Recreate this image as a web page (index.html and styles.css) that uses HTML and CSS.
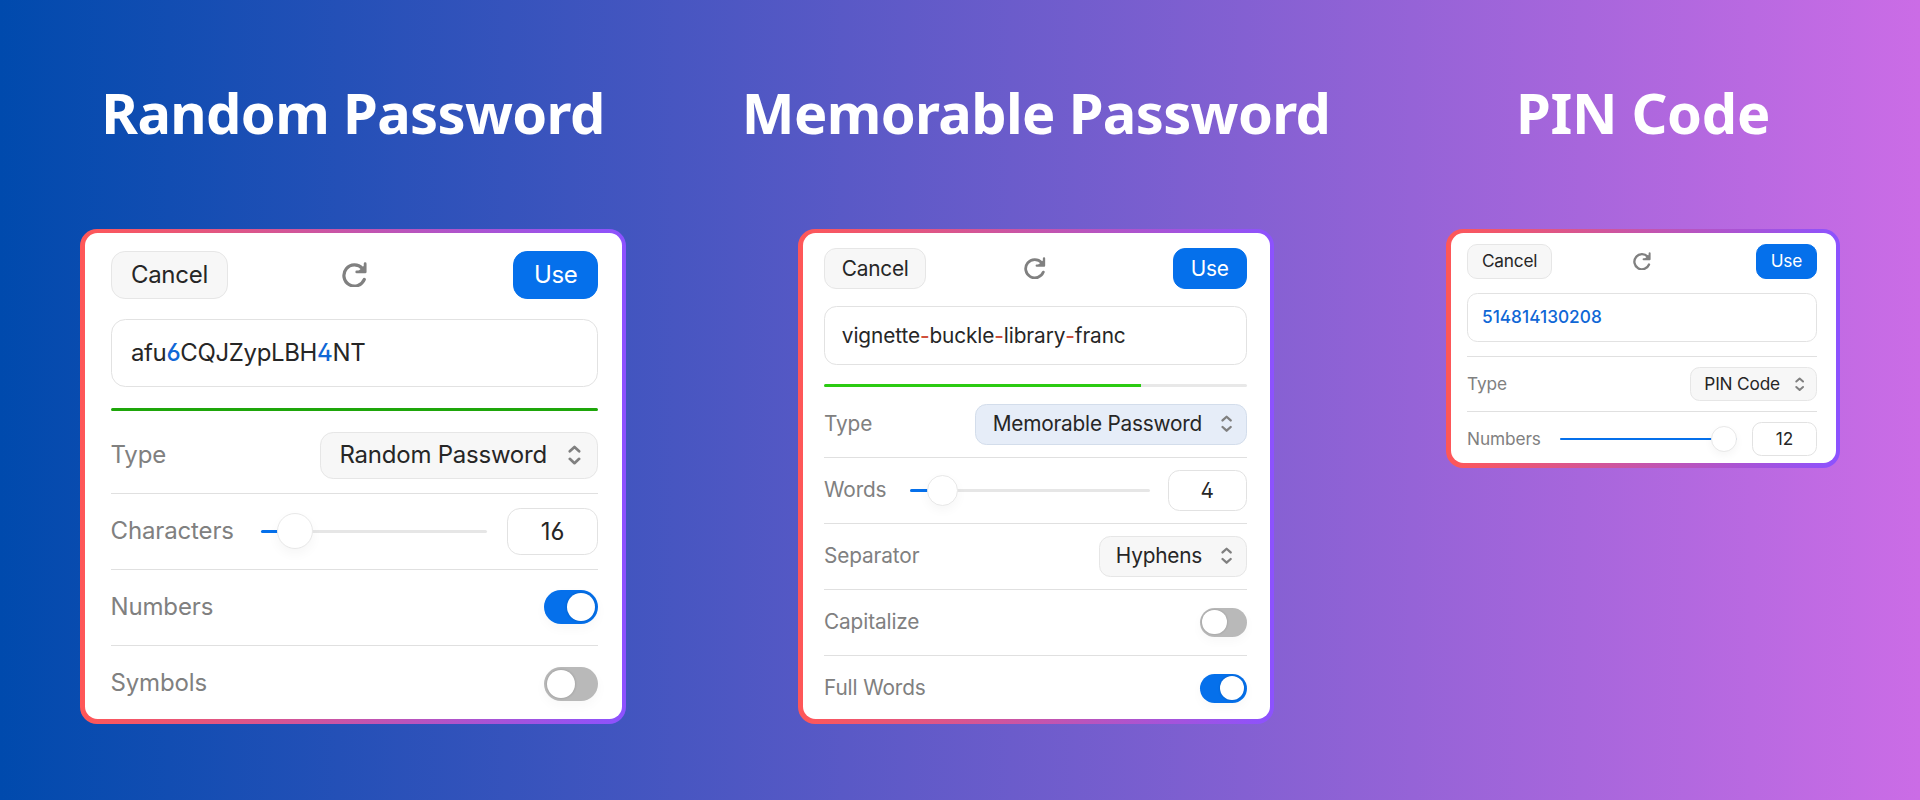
FILE: index.html
```
<!DOCTYPE html>
<html lang="en">
<head>
<meta charset="utf-8">
<title>Password generator</title>
<link rel="stylesheet" href="styles.css">
</head>
<body>
<svg width="0" height="0" class="sprite" aria-hidden="true">
  <symbol id="refresh" viewBox="0 0 24 25">
    <path d="M21.5 16.8A10.2 10.2 0 1 1 19.6 6.2" fill="none" stroke="currentColor" stroke-width="3.1" stroke-linecap="round"/>
    <path d="M22.3 1.6V9.6H14.2" fill="none" stroke="currentColor" stroke-width="2.7" stroke-linecap="round" stroke-linejoin="round"/>
    <path d="M22 3V9.6H14.8z" fill="currentColor"/>
  </symbol>
  <symbol id="updown" viewBox="0 0 13 20">
    <path d="M1.8 6.2L6.5 1.9L11.2 6.2M1.8 13.8L6.5 18.1L11.2 13.8" fill="none" stroke="currentColor" stroke-width="2.7" stroke-linecap="round" stroke-linejoin="round"/>
  </symbol>
</svg>
<main class="board">
  <section class="column">
    <h2 class="title">Random Password</h2>
    <div class="card card-random">
      <div class="panel">
        <div class="toolbar">
          <button class="btn"><span>Cancel</span></button>
          <svg class="refresh"><use href="#refresh"/></svg>
          <button class="btn btn-use"><span>Use</span></button>
        </div>
        <div class="field"><span class="secret">afu<b>6</b>CQJZypLBH<b>4</b>NT</span></div>
        <div class="strength"><div class="fill fill-strong" style="width:100%"></div></div>
        <div class="rows">
          <div class="row"><span class="label">Type</span><div class="select"><span>Random Password</span><svg class="updown"><use href="#updown"/></svg></div></div>
          <div class="row"><span class="label">Characters</span><div class="slider"><div class="bar" style="width:15%"></div><div class="thumb"></div></div><div class="number">16</div></div>
          <div class="row"><span class="label">Numbers</span><div class="toggle on"><i></i></div></div>
          <div class="row"><span class="label">Symbols</span><div class="toggle"><i></i></div></div>
        </div>
      </div>
    </div>
  </section>
  <section class="column">
    <h2 class="title">Memorable Password</h2>
    <div class="card card-memorable">
      <div class="panel">
        <div class="toolbar">
          <button class="btn"><span>Cancel</span></button>
          <svg class="refresh"><use href="#refresh"/></svg>
          <button class="btn btn-use"><span>Use</span></button>
        </div>
        <div class="field"><span class="words">vignette<em>-</em>buckle<em>-</em>library<em>-</em>franc</span></div>
        <div class="strength"><div class="fill" style="width:75%"></div></div>
        <div class="rows">
          <div class="row"><span class="label">Type</span><div class="select active"><span>Memorable Password</span><svg class="updown"><use href="#updown"/></svg></div></div>
          <div class="row"><span class="label">Words</span><div class="slider"><div class="bar" style="width:13.5%"></div><div class="thumb"></div></div><div class="number">4</div></div>
          <div class="row"><span class="label">Separator</span><div class="select"><span>Hyphens</span><svg class="updown"><use href="#updown"/></svg></div></div>
          <div class="row"><span class="label">Capitalize</span><div class="toggle"><i></i></div></div>
          <div class="row"><span class="label">Full Words</span><div class="toggle on"><i></i></div></div>
        </div>
      </div>
    </div>
  </section>
  <section class="column">
    <h2 class="title title-pin">PIN Code</h2>
    <div class="card card-pin">
      <div class="panel">
        <div class="toolbar">
          <button class="btn"><span>Cancel</span></button>
          <svg class="refresh"><use href="#refresh"/></svg>
          <button class="btn btn-use"><span>Use</span></button>
        </div>
        <div class="field"><span class="pin"><b>514814130208</b></span></div>
        <div class="rows rows-ruled">
          <div class="row"><span class="label">Type</span><div class="select"><span>PIN Code</span><svg class="updown"><use href="#updown"/></svg></div></div>
          <div class="row"><span class="label">Numbers</span><div class="slider"><div class="bar" style="width:100%"></div><div class="thumb"></div></div><div class="number">12</div></div>
        </div>
      </div>
    </div>
  </section>
</main>
</body>
</html>
```

FILE: styles.css
```
* { box-sizing: border-box; }
body { margin: 0; }
.sprite { position: absolute; }
.board {
  width: 1920px;
  height: 800px;
  padding: 72px 80px 0;
  display: grid;
  grid-template-columns: 546px 476px 394px;
  justify-content: space-between;
  align-items: start;
  overflow: hidden;
  background: linear-gradient(90deg, #004aad, #cb6ce6);
}
.column { display: flex; flex-direction: column; align-items: center; }
.title {
  margin: 0;
  height: 156.5px;
  font: 700 56px/80px "Noto Sans", sans-serif;
  letter-spacing: -.65px;
  color: #fff;
  white-space: nowrap;
}
.title-pin { letter-spacing: -.3px; }
.card {
  width: 100%;
  padding: 4.5px;
  border-radius: 17px;
  background: linear-gradient(90deg, #ff5757, #8c52ff);
  font-family: Inter, sans-serif;
  font-feature-settings: "cv02", "cv03", "cv04";
  color: #262626;
}
.card-random { font-size: 24px; height: 495px; }
.card-memorable { font-size: 20.8px; height: 495px; }
.card-pin { font-size: 17.25px; height: 239px; }
.panel { height: 100%; background: #fff; border-radius: 12.5px; overflow: hidden; }
.card-random .panel { padding: 18px 23.5px 0 26px; }
.card-memorable .panel { padding: 14.5px 23px 0 21.5px; }
.card-pin .panel { padding: 11px 18.5px 0 16.5px; }
.toolbar { display: grid; grid-template-columns: 1fr auto 1fr; align-items: center; }
.btn {
  justify-self: start;
  height: 2em;
  padding: 0 .81em;
  border: .06em solid #e6e6e6;
  border-radius: .58em;
  background: #f7f7f7;
  font: inherit;
  font-feature-settings: inherit;
  letter-spacing: -.012em;
  color: inherit;
}
.btn span, .label, .select span, .field span { padding-bottom: .08em; }
.btn span { display: block; }
.card-memorable .btn span, .card-memorable .field span { padding-bottom: 0; }
.btn-use { justify-self: end; background: #0570eb; border-color: #0570eb; color: #fff; }
.refresh { width: 1.04em; height: 1.08em; margin-top: -.04em; color: #808080; }
.field {
  height: 2.84em;
  margin-top: .83em;
  padding: 0 .81em;
  display: flex;
  align-items: center;
  border: .06em solid #e2e2e2;
  border-radius: .6em;
}
.field b { font-weight: 500; color: #0f67d6; }
.field em { font-style: normal; font-weight: 500; color: #d0503c; }
.secret { letter-spacing: -.015em; }
.words { letter-spacing: -.005em; }
.field .pin b { font-weight: 450; }
.strength { height: 3px; margin-top: .87em; border-radius: 2px; background: #e8e8e8; overflow: hidden; }
.fill { height: 100%; background: #2bcb12; }
.fill-strong { background: #1ea60a; }
.rows { margin-top: .2em; }
.card-random .rows { margin-top: .23em; }
.row {
  height: 3.175em;
  display: flex;
  align-items: center;
  justify-content: space-between;
  border-top: .06em solid #e0e0e0;
}
.row:first-child { border-color: transparent; }
.rows-ruled { margin-top: .83em; }
.rows-ruled .row:first-child { border-color: #e0e0e0; }
.label { color: #808080; letter-spacing: -.006em; }
.select {
  height: 1.96em;
  padding: 0 .65em 0 .78em;
  display: flex;
  align-items: center;
  gap: .9em;
  border: .06em solid #e6e6e6;
  border-radius: .55em;
  background: #f7f7f7;
  letter-spacing: -.01em;
}
.select.active { background: #e6edf8; border-color: #d3ddeb; }
.updown { width: .54em; height: .84em; color: #808080; }
.slider {
  flex: 1;
  height: 3px;
  margin: 0 .86em 0 1.13em;
  display: flex;
  align-items: center;
  border-radius: 2px;
  background: #e6e6e6;
}
.bar { height: 100%; flex: none; background: #0570eb; border-radius: 2px; }
.thumb {
  flex: none;
  width: 1.5em;
  height: 1.5em;
  margin: 0 -.75em;
  border-radius: 50%;
  background: #fff;
  border: .06em solid #e8e8e8;
  box-shadow: 0 .2em .5em rgba(0,0,0,.04);
}
.card-pin .slider { height: 2.5px; }
.card-pin .thumb { margin-left: -1.5em; }
.number {
  width: 3.78em;
  height: 1.96em;
  display: flex;
  align-items: center;
  justify-content: center;
  border: .06em solid #e2e2e2;
  border-radius: .55em;
}
.toggle {
  width: 2.25em;
  height: 1.42em;
  padding: .13em;
  display: flex;
  border-radius: 1em;
  background: #b9b9b9;
  box-shadow: 0 .2em .5em rgba(0,0,0,.03);
}
.toggle.on { background: #0570eb; justify-content: flex-end; }
.toggle i { width: 1.16em; height: 1.16em; border-radius: 50%; background: #fff; box-shadow: 0 0 .12em rgba(0,0,0,.2); }
```
